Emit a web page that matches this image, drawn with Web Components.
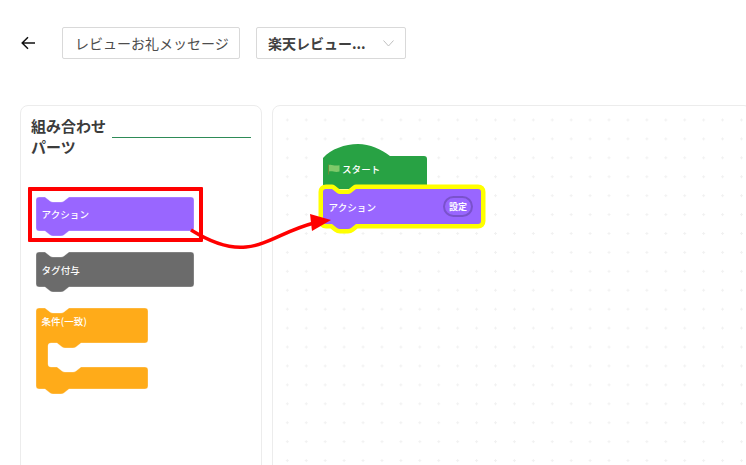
<!DOCTYPE html>
<html lang="ja">
<head>
<meta charset="utf-8">
<title>レビューお礼メッセージ</title>
<style>
  html, body { margin: 0; background: #fff; }
  body { width: 746px; height: 465px; overflow: hidden; font-family: "Noto Sans CJK JP", "Noto Sans", sans-serif; }
</style>
</head>
<body>
<flow-editor>
  <top-bar slot="top">
    <text-field>レビューお礼メッセージ</text-field>
    <select-field>楽天レビュー...</select-field>
  </top-bar>
  <parts-panel slot="left">
    <stack-block color="#9966ff" width="158" height="34">アクション</stack-block>
    <stack-block color="#6b6b6b" width="158" height="35">タグ付与</stack-block>
    <branch-block color="#ffab19" width="112">条件(一致)</branch-block>
  </parts-panel>
  <block-canvas slot="main">
    <hat-block color="#28a244" width="104"><flag-icon></flag-icon>スタート</hat-block>
    <stack-block color="#9966ff" width="158" height="35" selected>アクション<pill-button slot="end">設定</pill-button></stack-block>
  </block-canvas>
  <drag-hint slot="hint"></drag-hint>
</flow-editor>

<script>
// notch shared by every block edge, runs left to right from x
function notch(x, y) {
  return `L${x + 9} ${y} l5 4 q1.3 1 3 1 h8 q1.700 0 3 -1 l5 -4`;
}
function notchBack(x, y) {
  return `L${x + 33} ${y} l-5 4 q-1.300 1 -3 1 h-8 q-1.700 0 -3 -1 l-5 -4`;
}

const rim = 'stroke="rgba(255,255,255,.3)" stroke-width="1"';

const blockStyle = `
  :host {
    display: block;
    position: relative;
    color: #fff;
    font-size: 9.500px;
    font-weight: 500;
    letter-spacing: 0.100px;
  }
  svg { position: absolute; left: 0; top: 0; overflow: visible; }
  .label { position: relative; display: flex; align-items: center; }
`;

class StackBlock extends HTMLElement {
  constructor() {
    super();
    const w = Number(this.getAttribute('width'));
    const h = Number(this.getAttribute('height'));
    const color = this.getAttribute('color');
    const selected = this.hasAttribute('selected');
    const d = `M0 3 q0 -3 3 -3 ${notch(0, 0)} H${w - 3} q3 0 3 3 V${h - 3} q0 3 -3 3 ${notchBack(0, h)} H3 q-3 0 -3 -3 Z`;
    const outline = selected ? 'stroke="#ffff00" stroke-width="9" stroke-linejoin="round" paint-order="stroke"' : rim;
    this.attachShadow({ mode: 'open' }).innerHTML = `
      <style>
        ${blockStyle}
        :host { width: ${w}px; height: ${h + 6}px; }
        .label { height: ${h}px; padding: 0 ${selected ? 8 : 0}px 0 5.500px; box-sizing: border-box; justify-content: space-between; }
      </style>
      <svg width="${w}" height="${h + 6}"><path d="${d}" fill="${color}" ${outline}/></svg>
      <div class="label"><span><slot></slot></span><slot name="end"></slot></div>
    `;
  }
}

class BranchBlock extends HTMLElement {
  constructor() {
    super();
    const w = Number(this.getAttribute('width'));
    const color = this.getAttribute('color');
    const d = `M0 3 q0 -3 3 -3 ${notch(0, 0)} H${w - 3} q3 0 3 3 V32 q0 3 -3 3
      ${notchBack(12, 35)} H15 q-3 0 -3 3 V56 q0 3 3 3 ${notch(12, 59).replace(/^L\S+ \S+/, 'L21 59')}
      H${w - 3} q3 0 3 3 V78 q0 3 -3 3 ${notchBack(0, 81)} H3 q-3 0 -3 -3 Z`;
    this.attachShadow({ mode: 'open' }).innerHTML = `
      <style>
        ${blockStyle}
        :host { width: ${w}px; height: 87px; }
        .label { height: 26px; padding-left: 5.500px; }
      </style>
      <svg width="${w}" height="87"><path d="${d}" fill="${color}" ${rim}/></svg>
      <div class="label"><slot></slot></div>
    `;
  }
}

class HatBlock extends HTMLElement {
  constructor() {
    super();
    const w = Number(this.getAttribute('width'));
    const color = this.getAttribute('color');
    const d = `M0 14 C8 5 22 0 35 0 C47 0 58 5 67 12 H${w - 3} q3 0 3 3 V45 H0 Z`;
    this.attachShadow({ mode: 'open' }).innerHTML = `
      <style>
        ${blockStyle}
        :host { width: ${w}px; height: 45px; }
        .label { height: 45px; padding: 5px 0 0 5px; box-sizing: border-box; gap: 0; }
      </style>
      <svg width="${w}" height="45"><path d="${d}" fill="${color}"/></svg>
      <div class="label"><slot></slot></div>
    `;
  }
}

class PillButton extends HTMLElement {
  constructor() {
    super();
    this.attachShadow({ mode: 'open' }).innerHTML = `
      <style>
        :host {
          display: flex;
          align-items: center;
          justify-content: center;
          width: 30px;
          height: 21px;
          box-sizing: border-box;
          border: 2px solid #7a52cc;
          border-radius: 11px;
          font-size: 9px;
          font-weight: 700;
        }
      </style>
      <slot></slot>
    `;
  }
}

class FlagIcon extends HTMLElement {
  constructor() {
    super();
    this.attachShadow({ mode: 'open' }).innerHTML = `
      <style>:host { display: inline-flex; width: 12px; height: 11px; margin-right: 2px; }</style>
      <svg width="12" height="11" viewBox="0 0 12 11">
        <path d="M0.600 0.500 V10.500" stroke="#6f8f3a" stroke-width="1"/>
        <path d="M1 1 C4 0 6 2.500 11.500 1.200 V7.500 C7 8.800 4 6.500 1 7.500 Z" fill="#7fc96a"/>
      </svg>
    `;
  }
}

class TextField extends HTMLElement {
  constructor() {
    super();
    this.attachShadow({ mode: 'open' }).innerHTML = `
      <style>
        :host {
          display: flex;
          align-items: center;
          width: 178px;
          height: 32px;
          box-sizing: border-box;
          padding-left: 12px;
          border: 1px solid #d9d9d9;
          border-radius: 2px;
          color: #4d4d4d;
          font-size: 14px;
          white-space: nowrap;
        }
      </style>
      <slot></slot>
    `;
  }
}

class SelectField extends HTMLElement {
  constructor() {
    super();
    this.attachShadow({ mode: 'open' }).innerHTML = `
      <style>
        :host {
          display: flex;
          align-items: center;
          justify-content: space-between;
          width: 150px;
          height: 32px;
          box-sizing: border-box;
          padding: 0 11px;
          border: 1px solid #d9d9d9;
          border-radius: 2px;
          color: #404040;
          font-size: 14px;
          font-weight: 700;
          white-space: nowrap;
        }
        svg { display: block; }
      </style>
      <span><slot></slot></span>
      <svg width="11" height="7" viewBox="0 0 11 7"><path d="M0.500 0.500 L5.500 6 L10.500 0.500" fill="none" stroke="#bfbfbf" stroke-width="1"/></svg>
    `;
  }
}

class TopBar extends HTMLElement {
  constructor() {
    super();
    this.attachShadow({ mode: 'open' }).innerHTML = `
      <style>
        :host { display: flex; align-items: center; height: 32px; padding: 27px 0 0 21px; }
        svg { display: block; margin-right: 27px; }
        .fields { display: flex; gap: 16px; }
      </style>
      <svg width="14" height="14" viewBox="0 0 14 14">
        <path d="M14 7 H1.500 M7 1.200 L1.200 7 L7 12.800" fill="none" stroke="#111" stroke-width="1.500"/>
      </svg>
      <div class="fields"><slot></slot></div>
    `;
  }
}

class PartsPanel extends HTMLElement {
  constructor() {
    super();
    this.attachShadow({ mode: 'open' }).innerHTML = `
      <style>
        :host {
          display: block;
          width: 242px;
          height: 400px;
          box-sizing: border-box;
          padding: 9px 10px 0 10px;
          border: 1px solid #ececec;
          border-radius: 8px;
          flex: none;
        }
        .head { display: flex; align-items: flex-start; gap: 6px; }
        h2 {
          margin: 0;
          width: 75px;
          color: #3c3c3c;
          font-size: 15px;
          font-weight: 700;
          line-height: 21px;
        }
        .name { flex: 1; height: 22px; border-bottom: 1px solid #2e8b57; }
        .list { display: flex; flex-direction: column; gap: 15px; padding: 40px 0 0 5px; }
      </style>
      <div class="head"><h2>組み合わせパーツ</h2><div class="name"></div></div>
      <div class="list"><slot></slot></div>
    `;
  }
}

class BlockCanvas extends HTMLElement {
  constructor() {
    super();
    this.attachShadow({ mode: 'open' }).innerHTML = `
      <style>
        :host {
          display: block;
          width: 480px;
          height: 400px;
          box-sizing: border-box;
          border: 1px solid #ececec;
          border-radius: 8px;
          flex: none;
          background-image: radial-gradient(circle, #f1f1f1 1px, transparent 1.400px);
          background-size: 18.930px 18.930px;
          background-position: 4.900px 4.500px;
        }
        .stack { position: absolute; left: 323px; top: 144px; }
      </style>
      <div class="stack"><slot></slot></div>
    `;
  }
}

class DragHint extends HTMLElement {
  constructor() {
    super();
    this.attachShadow({ mode: 'open' }).innerHTML = `
      <style>
        :host { position: absolute; left: 0; top: 0; width: 746px; height: 465px; pointer-events: none; }
        .frame {
          position: absolute;
          left: 28px;
          top: 187px;
          width: 175px;
          height: 55px;
          box-sizing: border-box;
          border: 4px solid #ff0000;
          border-radius: 1px;
        }
        svg { position: absolute; left: 0; top: 0; }
      </style>
      <div class="frame"></div>
      <svg width="746" height="465">
        <path d="M191 230 C212 243 229 249 246 247 C268 245 286 230 314 223" fill="none" stroke="#ff0000" stroke-width="3.500"/>
        <path d="M310 214 L331 220 L312 231 Z" fill="#ff0000"/>
      </svg>
    `;
  }
}

class FlowEditor extends HTMLElement {
  constructor() {
    super();
    this.attachShadow({ mode: 'open' }).innerHTML = `
      <style>
        :host { display: block; position: relative; width: 746px; height: 465px; overflow: hidden; }
        .panels { display: flex; gap: 10px; padding: 46px 0 0 20px; }
      </style>
      <slot name="top"></slot>
      <div class="panels"><slot name="left"></slot><slot name="main"></slot></div>
      <slot name="hint"></slot>
    `;
  }
}

customElements.define('stack-block', StackBlock);
customElements.define('branch-block', BranchBlock);
customElements.define('hat-block', HatBlock);
customElements.define('pill-button', PillButton);
customElements.define('flag-icon', FlagIcon);
customElements.define('text-field', TextField);
customElements.define('select-field', SelectField);
customElements.define('top-bar', TopBar);
customElements.define('parts-panel', PartsPanel);
customElements.define('block-canvas', BlockCanvas);
customElements.define('drag-hint', DragHint);
customElements.define('flow-editor', FlowEditor);
</script>
</body>
</html>
